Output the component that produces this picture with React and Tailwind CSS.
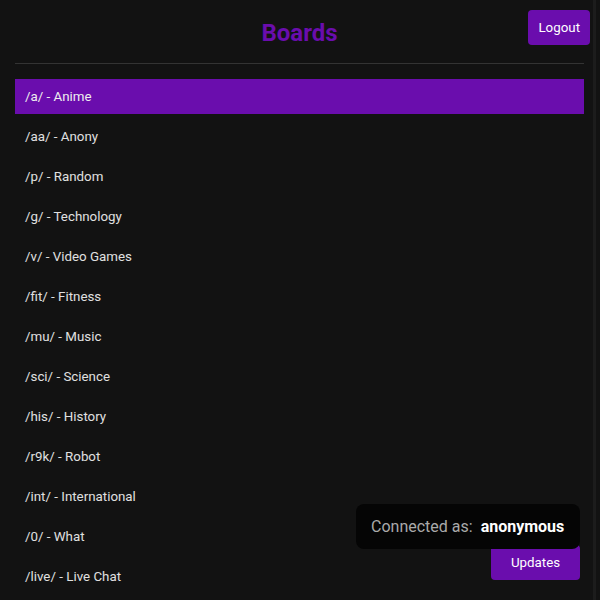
const boards = [
  { slug: "a", name: "Anime" },
  { slug: "aa", name: "Anony" },
  { slug: "p", name: "Random" },
  { slug: "g", name: "Technology" },
  { slug: "v", name: "Video Games" },
  { slug: "fit", name: "Fitness" },
  { slug: "mu", name: "Music" },
  { slug: "sci", name: "Science" },
  { slug: "his", name: "History" },
  { slug: "r9k", name: "Robot" },
  { slug: "int", name: "International" },
  { slug: "0", name: "What" },
  { slug: "live", name: "Live Chat" },
];

const App = () => {
  return (
    <div className="h-[600px] overflow-hidden bg-[#121212] font-['Roboto',sans-serif] relative">
      <div className="pl-[15px] pr-[16px]">
        {/* header */}
        <header className="grid grid-cols-[1fr_auto_1fr] items-start pt-[10px]">
          <div></div>
          <h1 className="mt-[7px] text-center text-[24px] leading-[32px] font-bold text-[#6a0dad]">Boards</h1>
          <div className="flex justify-end -mr-[6px]">
            <button className="h-[35px] px-[10px] rounded-[4px] bg-[#6a0dad] text-white text-[13.33px]">
              Logout
            </button>
          </div>
        </header>
        <div className="mt-[14px] h-px bg-[#333]"></div>

        <ul className="mt-[15px] flex flex-col gap-[5px]">
          {boards.map((b, i) => (
            <li
              key={b.slug}
              className={
                i === 0
                  ? "h-[35px] flex items-center px-[10px] text-[13.33px] text-[#eee] bg-[#6a0dad]"
                  : "h-[35px] flex items-center px-[10px] text-[13.33px] text-[#e0e0e0]"
              }
            >
              /{b.slug}/ - {b.name}
            </li>
          ))}
        </ul>
      </div>

      {/* thin scrollbar */}
      <div className="absolute top-0 right-[4px] w-[3px] h-full bg-[#1c1c1c]"></div>

      <button className="absolute bottom-[20px] right-[20px] w-[89px] h-[35px] rounded-[4px] bg-[#6a0dad] text-white text-[13.33px]">
        Updates
      </button>
      <div className="absolute bottom-[51px] right-[20px] w-[224px] h-[45px] rounded-[8px] bg-[#050505] flex items-center pl-[15px] gap-[8px] text-[16px]">
        <span className="text-[#aaa]">Connected as:</span>
        <span className="font-bold text-white">anonymous</span>
      </div>
    </div>
  );
};

export default App;
